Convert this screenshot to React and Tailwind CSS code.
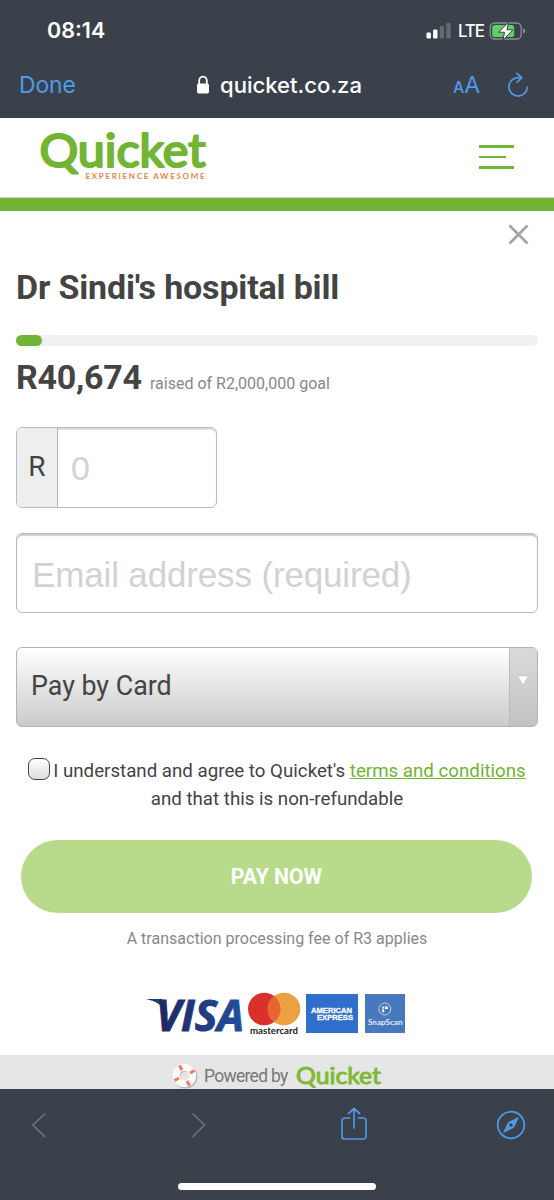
function StatusBar() {
  return (
    <div className="flex h-[62px] items-center justify-between pl-[47px] pr-[28px]">
      <span className="text-[21.5px] font-semibold leading-none text-white">08:14</span>
      <div className="flex items-center">
        <svg width="26" height="16" viewBox="0 0 26 16">
          <rect x="0.500" y="9.500" width="4.400" height="6" rx="1.200" fill="#fff" />
          <rect x="7.100" y="6.500" width="4.400" height="9" rx="1.200" fill="#fff" />
          <rect x="13.700" y="3" width="4.400" height="12.500" rx="1.200" fill="#656b74" />
          <rect x="20.300" y="0" width="4.400" height="15.500" rx="1.200" fill="#656b74" />
        </svg>
        <span className="ml-[6px] w-[31px] text-[17px] font-medium leading-none tracking-[-1.2px] text-white">LTE</span>
        <svg width="37" height="20" viewBox="0 0 37 20">
          <rect x="1.2" y="2" width="31" height="16" rx="4.5" fill="none" stroke="#8b9097" strokeWidth="1.3" />
          <rect x="3.2" y="4" width="22" height="12" rx="2.8" fill="#5fd068" />
          <path d="M34 7.5v5c1.5-.4 2.2-1.3 2.2-2.5s-.7-2.1-2.2-2.5z" fill="#8b9097" />
          <path d="M19.500 1.200 9.500 11.200h6L14 19l10-10.200h-6z" fill="#fff" stroke="#39404a" strokeWidth="1" />
        </svg>
      </div>
    </div>
  );
}

function AddressBar() {
  return (
    <div className="flex h-[56px] items-center pb-[9px] pl-[19px]">
      <span className="w-[177px] text-[22.8px] leading-none text-[#4f9be8]">Done</span>
      <svg className="mb-[2px]" width="14" height="20" viewBox="0 0 14 20">
        <path d="M3.200 9V5.500a3.800 3.800 0 0 1 7.600 0V9" fill="none" stroke="#fff" strokeWidth="1.800" />
        <rect x="1" y="8.500" width="12" height="10" rx="1.800" fill="#fff" />
      </svg>
      <span className="ml-[10px] w-[233px] text-[22.1px] font-medium leading-none text-white">quicket.co.za</span>
      <span className="flex w-[54px] items-baseline leading-none text-[#4f9be8]">
        <span className="text-[16px] font-medium">A</span>
        <span className="text-[23px]">A</span>
      </span>
      <svg className="mb-[2px]" width="22" height="26" viewBox="0 0 22 26" fill="none" stroke="#4f9be8" strokeWidth="1.700" strokeLinecap="round" strokeLinejoin="round">
        <path d="M13.500 5.700H11a9.200 9.200 0 1 0 9.300 9.300" />
        <path d="M9.800 1.300 14.700 5.700 10 10.300" />
      </svg>
    </div>
  );
}

function SiteHeader() {
  return (
    <div className="flex h-[80px] items-start justify-between border-b border-[#ccc] bg-white pl-[38px] pr-[40px]">
      <svg className="mt-[8px] overflow-visible" width="175" height="60" viewBox="0 0 175 60">
        <text x="1.500" y="40.500" textLength="166" lengthAdjust="spacingAndGlyphs" fill="#72b433" stroke="#72b433" strokeWidth="2.200" strokeLinejoin="round" className="font-['Lato'] text-[46px] font-normal">
          Quicket
        </text>
        <text x="47.500" y="52.600" textLength="119" fill="#e8863f" className="font-['Lato'] text-[8px] font-bold">
          EXPERIENCE AWESOME
        </text>
      </svg>
      <div className="mt-[27px] flex w-[35px] flex-col gap-[8px]">
        <div className="h-[2.500px] bg-[#72b433]" />
        <div className="h-[2.500px] w-[27px] bg-[#72b433]" />
        <div className="h-[2.500px] bg-[#72b433]" />
      </div>
    </div>
  );
}

function DonateForm() {
  return (
    <div className="flex flex-col px-4 text-[#444]">
      <h1 className="mt-[16px] h-[40px] whitespace-nowrap text-[34px] font-bold leading-[40px] tracking-[-0.17px]">Dr Sindi's hospital bill</h1>

      {/* Progress */}
      <div className="mt-[28px] h-[11px] rounded-full bg-[#f0f0f0]">
        <div className="h-full w-[26px] rounded-full bg-[#72b433]" />
      </div>
      <div className="mt-[11px] flex h-[39px] items-baseline whitespace-nowrap leading-[40px]">
        <span className="w-[134px] text-[34px] font-bold tracking-[-0.3px]">R40,674</span>
        <span className="text-[16px] text-[#888]">raised of R2,000,000 goal</span>
      </div>

      {/* Amount */}
      <div className="mt-[31px] flex h-[81px] w-[201px] overflow-hidden rounded-md border border-[#bbb] shadow-[inset_0_2px_1px_#ddd]">
        <div className="flex w-[41px] items-center justify-center border-r border-[#bbb] bg-[#eee] pb-[1px] text-[28px]">R</div>
        <div className="pl-[13px] pt-[1px] font-['Liberation_Sans'] text-[34px] leading-[79px] text-[#d2d2d2]">0</div>
      </div>

      {/* Email */}
      <div className="mt-[25px] h-[80px] whitespace-nowrap rounded-md border border-[#bbb] pl-[15px] pt-[1px] font-['Liberation_Sans'] text-[35px] leading-[79px] tracking-[-0.15px] text-[#d2d2d2] shadow-[inset_0_2px_1px_#ccc]">
        Email address (required)
      </div>

      {/* Payment method */}
      <div className="mt-[34px] flex h-[80px] overflow-hidden rounded-md border border-[#b3b3b3] bg-linear-to-b from-white to-[#cbcbcb]">
        <div className="flex-1 pl-[14px] text-[26.8px] leading-[77px]">Pay by Card</div>
        <div className="flex w-[28px] justify-center border-l border-[#bbb] bg-linear-to-b from-[#dadada] to-[#c3c3c3] pr-[2px] pt-[27px]">
          <svg width="12" height="11" viewBox="0 0 12 11">
            <path d="M.8 1h10.400L6 10z" fill="#fff" stroke="#bbb" strokeWidth="0.500" />
          </svg>
        </div>
      </div>

      <div className="mt-[30px] flex flex-col items-center whitespace-nowrap text-[18.720px] leading-[28px]">
        <div className="flex items-center">
          <span className="mr-[3px] mt-[-4px] size-[22px] rounded-[7px] border-[1.500px] border-[#444] bg-linear-to-b from-white to-[#ddd]" />
          I understand and agree to Quicket's&nbsp;
          <span className="text-[#72b433] underline">terms and conditions</span>
        </div>
        <div>and that this is non-refundable</div>
      </div>

      <button className="ml-[5px] mt-[27px] h-[73px] w-[511px] rounded-full bg-[#b7db8b] text-[21.2px] font-bold text-white">
        PAY NOW
      </button>
      <p className="mt-[13px] text-center text-[16.050px] leading-[26px] text-[#888]">A transaction processing fee of R3 applies</p>
    </div>
  );
}

function PaymentLogos() {
  return (
    <div className="mt-[40px] flex h-[63px] pl-[145px]">
      <svg className="overflow-visible" width="100" height="45" viewBox="0 0 100 45">
        <defs>
          <linearGradient id="visa" x1="0" x2="1">
            <stop offset="0" stopColor="#20245f" />
            <stop offset="1" stopColor="#20509f" />
          </linearGradient>
        </defs>
        <path d="M1 7h14c3 0 5 1.500 5.600 4.500L23 24C19 14 11 9 1 7z" fill="url(#visa)" />
        <text x="11" y="38.500" textLength="88" lengthAdjust="spacingAndGlyphs" fill="url(#visa)" stroke="url(#visa)" strokeWidth="1" className="font-['Open_Sans'] text-[43px] font-bold italic">
          VISA
        </text>
      </svg>
      <svg width="60" height="45" viewBox="0 0 60 45">
        <circle cx="19.300" cy="17" r="16.300" fill="#d9302c" />
        <circle cx="39" cy="17" r="16.300" fill="#e9a23f" />
        <path d="M29.150 4a16.300 16.300 0 0 1 0 26a16.300 16.300 0 0 1 0-26z" fill="#e96430" />
        <text x="5" y="41.500" textLength="48" lengthAdjust="spacingAndGlyphs" fill="#222" className="font-['Lato'] text-[10px] font-bold">
          mastercard
        </text>
      </svg>
      <svg className="ml-[1px] mt-[2px]" width="52" height="39" viewBox="0 0 52 39">
        <rect width="52" height="39" fill="#2f6ecb" />
        <g fill="#fff" stroke="#fff" strokeWidth="0.300" className="font-['Liberation_Sans'] text-[7.500px] font-bold">
          <text x="5" y="18.800" textLength="41" lengthAdjust="spacingAndGlyphs">AMERICAN</text>
          <text x="11" y="26" textLength="36" lengthAdjust="spacingAndGlyphs">EXPRESS</text>
        </g>
      </svg>
      <svg className="ml-[7px] mt-[2px]" width="40" height="39" viewBox="0 0 40 39">
        <rect width="40" height="39" fill="#4878be" />
        <circle cx="19.800" cy="15" r="6" fill="none" stroke="#d5e1f2" strokeWidth="0.800" />
        <path d="M17.200 12.500h2v2h-2zM17.200 15.300h2v3h-2zM20 12.500h3v2.500h-3z" fill="#fff" />
        <text x="3" y="31" textLength="34.500" lengthAdjust="spacingAndGlyphs" fill="#e5edf7" className="font-['Lato'] text-[8px] font-bold">
          SnapScan
        </text>
      </svg>
    </div>
  );
}

function PoweredBy() {
  return (
    <div className="flex h-[34px] items-center bg-[#e6e6e6] pl-[171px] pt-[7px]">
      <svg width="28" height="28" viewBox="0 0 28 28">
        <circle cx="14.500" cy="14.500" r="8.500" fill="none" stroke="#b5b5b5" strokeWidth="7" />
        <circle cx="13.500" cy="13.500" r="8.300" fill="none" stroke="#fafafa" strokeWidth="7" />
        <g stroke="#e8804f" strokeWidth="3">
          <path d="M8.500 3.500 11 8M23.500 8.500 19 11M18.500 23.500 16 19M3.500 18.500 8 16" />
        </g>
      </svg>
      <span className="ml-[5px] w-[91px] whitespace-nowrap pt-[2px] text-[17.5px] leading-none tracking-[-0.7px] text-[#777]">Powered by</span>
      <svg className="overflow-visible" width="90" height="28" viewBox="0 0 90 28">
        <text x="1" y="22" textLength="85" lengthAdjust="spacingAndGlyphs" fill="#80b936" stroke="#80b936" strokeWidth="1" strokeLinejoin="round" className="font-['Lato'] text-[24px] font-normal">
          Quicket
        </text>
      </svg>
    </div>
  );
}

function BottomBar() {
  return (
    <div className="flex h-[111px] flex-col bg-[#3a414b]">
      <div className="flex h-[94px] items-start pl-[30px] pt-[18px]">
        <svg className="mt-[4px]" width="18" height="28" viewBox="0 0 18 28" fill="none" stroke="#6b727b" strokeWidth="1.700">
          <path d="M15 2.500 3 14l12 12" />
        </svg>
        <svg className="ml-[142px] mt-[4px]" width="18" height="28" viewBox="0 0 18 28" fill="none" stroke="#6b727b" strokeWidth="1.700">
          <path d="M2.500 2.500 14.500 14l-12 12" />
        </svg>
        <svg className="ml-[132px]" width="28" height="34" viewBox="0 0 28 34" fill="none" stroke="#4f9be8" strokeWidth="1.700" strokeLinecap="round" strokeLinejoin="round">
          <path d="M9.500 11H4.500a2.500 2.500 0 0 0-2.500 2.500v16A2.500 2.500 0 0 0 4.500 32h19a2.500 2.500 0 0 0 2.500-2.500v-16a2.500 2.500 0 0 0-2.500-2.500h-5" />
          <path d="M14 21V1.500M8.500 6.500 14 1.500l5.500 5" />
        </svg>
        <svg className="ml-[128px] mt-[3px]" width="30" height="30" viewBox="0 0 30 30">
          <circle cx="15" cy="15" r="13.300" fill="none" stroke="#4f9be8" strokeWidth="1.700" />
          <path d="M22.300 7.700 17.500 17.500 7.700 22.300 12.500 12.500z" fill="#4f9be8" stroke="#4f9be8" strokeLinejoin="round" />
          <circle cx="15" cy="15" r="1.800" fill="#3a414b" />
        </svg>
      </div>
      <div className="mx-auto h-[7px] w-[198px] rounded-full bg-white" />
    </div>
  );
}

export default function App() {
  return (
    <div className="flex h-[1200px] w-[554px] flex-col overflow-hidden bg-white font-['Roboto',sans-serif]">
      <div className="h-[118px] bg-[#3a414b] font-['Inter',sans-serif]">
        <StatusBar />
        <AddressBar />
      </div>
      <SiteHeader />
      <div className="h-[13px] bg-[#72b433]" />
      <div className="flex h-[40px] justify-end pr-[25px] pt-[13px]">
        <svg width="21" height="21" viewBox="0 0 21 21" stroke="#a3a3a3" strokeWidth="2.600">
          <path d="M1.500 1.500l18 18M19.500 1.500l-18 18" />
        </svg>
      </div>
      <DonateForm />
      <PaymentLogos />
      <PoweredBy />
      <BottomBar />
    </div>
  );
}
